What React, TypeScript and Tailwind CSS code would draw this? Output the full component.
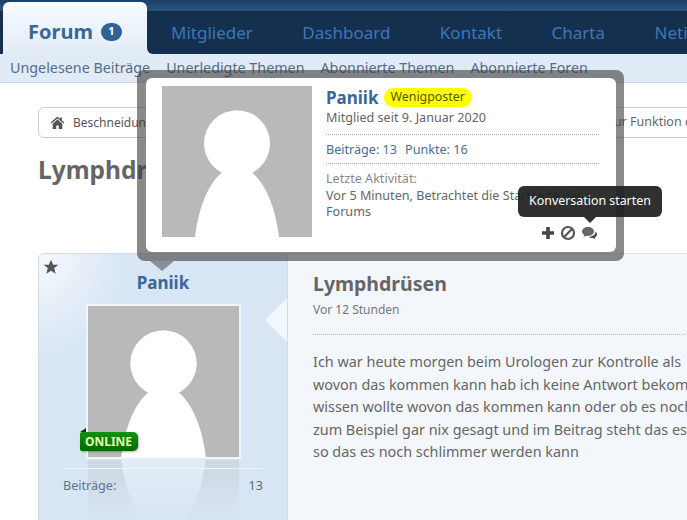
import React from "react";

const font = "font-['Noto_Sans','DejaVu_Sans',sans-serif]";

const Avatar = ({ className = "" }: { className?: string }) => (
  <svg viewBox="0 0 150 150" preserveAspectRatio="none" className={className}>
    <rect width="150" height="150" fill="#b9b9b9" />
    <circle cx="75" cy="57" r="33" fill="#fff" />
    <path d="M33 150C37 118 47 96 62 84H88C103 96 113 118 117 150Z" fill="#fff" />
  </svg>
);

const PopupIcons = () => (
  <div className="flex items-center justify-end gap-[5px] absolute right-0 top-[139px]">
    <svg viewBox="0 0 14 14" className="w-[14px] h-[14px]">
      <path d="M5.200 1h3.600v4.200H13v3.600H8.800V13H5.200V8.800H1V5.200h4.200z" fill="#444" />
    </svg>
    <svg viewBox="0 0 16 16" className="w-[16px] h-[16px]" fill="none" stroke="#555" strokeWidth="2.200">
      <circle cx="8" cy="8" r="6" />
      <path d="M3.800 12.200 12.200 3.800" />
    </svg>
    <svg viewBox="0 0 18 16" className="w-[18px] h-[16px]">
      <path d="M7 2C3.500 2 1 4 1 6.500c0 1.500.9 2.700 2.200 3.500L2.500 12l2.700-1.300c.6.1 1.200.2 1.800.2 3.500 0 6-2 6-4.400S10.500 2 7 2z" fill="#666" />
      <path d="M14.500 6.500c.3 2.800-2.800 5.300-6.500 5.300h-.5c1 .8 2.300 1.200 3.700 1.200l.8-.1 2.500 1.200-.6-1.800c1.300-.7 2.100-1.800 2.100-3 0-1.100-.6-2.100-1.500-2.800z" fill="#444" />
    </svg>
  </div>
);

const tabs = ["Mitglieder", "Dashboard", "Kontakt", "Charta", "Netiquette"];
const subs = ["Ungelesene Beiträge", "Unerledigte Themen", "Abonnierte Themen", "Abonnierte Foren"];
const lines = [
  "Ich war heute morgen beim Urologen zur Kontrolle als",
  "wovon das kommen kann hab ich keine Antwort bekom",
  "wissen wollte wovon das kommen kann oder ob es noch",
  "zum Beispiel gar nix gesagt und im Beitrag steht das es",
  "so das es noch schlimmer werden kann",
];

export default function App() {
  return (
    <div className={`${font} relative w-[687px] h-[520px] overflow-hidden bg-white text-[12px] text-[#555]`}>
      {/* header */}
      <div className="h-[54px] bg-[linear-gradient(#1c3f66_0,#2a5580_10px,#234a73_11px,#15304f_11px,#14304e_100%)] flex items-end pl-[3px] relative">
        <div className="w-[144px] h-[53px] -mb-px bg-[linear-gradient(#f7fbff,#e1ebf6)] rounded-t-[6px] flex items-center justify-center gap-[8px] pt-[6px] shrink-0">
          <span className="text-[20px] font-bold text-[#3a6795] leading-none">Forum</span>
          <span className="w-[21px] h-[18px] rounded-full bg-[#2d6396] text-white text-[11px] font-bold flex items-center justify-center">1</span>
        </div>
        <div className="flex h-[43px] items-center text-[17px] text-[#3b77ba] whitespace-nowrap pl-[24px] gap-[49.500px]">
          {tabs.map((t) => (
            <span key={t}>{t}</span>
          ))}
        </div>
        <div className="absolute left-[147px] bottom-0 w-[6px] h-[6px] bg-[#e1ebf6]">
          <div className="w-full h-full bg-[#14304e] rounded-bl-[6px]" />
        </div>
      </div>
      {/* sub nav */}
      <div className="h-[29px] pb-[1px] bg-[#e1ebf6] border-b border-[#ccd6e2] flex items-center pl-[10px] gap-[16px] text-[14.300px] text-[#566d87] whitespace-nowrap">
        {subs.map((s) => (
          <span key={s}>{s}</span>
        ))}
      </div>
      {/* page */}
      <div className="pl-[38px] pt-[24px]">
        <div className="h-[31px] w-[700px] border border-[#ccc] rounded-l-[6px] bg-white flex items-center pl-[11px] gap-[8px] whitespace-nowrap">
          <svg viewBox="0 0 16 14" className="w-[15px] h-[13px]">
            <path d="M8 0.500 0.500 7l1 1.200L8 2.600l6.500 5.600 1-1.200-2.800-2.400V1.500h-2v1.700z" fill="#555" />
            <path d="M2.800 8.400V14h3.900v-3.700h2.600V14h3.900V8.400L8 3.900z" fill="#555" />
          </svg>
          <span className="text-[12px] w-[527px] shrink-0">Beschneidung</span>
          <span className="text-[12.500px] text-[#666]">zur Funktion der</span>
        </div>
        <h1 className="mt-[17px] text-[24.500px] font-bold text-[#666] leading-[30px]">Lymphdrüsen</h1>
        <div className="mt-[68px] flex items-start">
          {/* user column */}
          <div className="relative w-[250px] h-[300px] shrink-0 border border-[#cfdbe8] rounded-tl-[6px] bg-[radial-gradient(ellipse_at_0_0,#f5f9fd_0,#d7e5f4_90px)] flex flex-col items-center">
            <svg viewBox="0 0 14 14" className="absolute left-[4px] top-[5px] w-[16px] h-[16px]">
              <path d="M7 .7 8.900 5H13.500L9.800 7.900 11.100 13 7 10.200 2.900 13 4.200 7.900.5 5H5.100z" fill="#555" />
            </svg>
            <div className="mt-[17px] text-[17px] font-bold text-[#3a6795] leading-[24px]">Paniik</div>
            <div className="relative mt-[9px] border-2 border-[#f1f5fa]">
              <Avatar className="block w-[151px] h-[151px]" />
              <div className="absolute left-[-8px] top-[126px] h-[19px] w-[58px] rounded-r-[5px] rounded-l-[2px] bg-[linear-gradient(#119211,#006a00)] text-[#e6ffb0] text-[12px] font-bold flex items-center justify-center shadow-[1px_1px_2px_rgba(0,0,0,.3)]">ONLINE</div>
              <div className="absolute left-[-8px] top-[122px] w-0 h-0 border-l-[6px] border-l-transparent border-b-[4px] border-b-[#0a3d0a]" />
            </div>
            <div className="w-[200px] border-t border-[#eef4fb] mt-[9px] pt-[8px] flex justify-between relative z-10 text-[12.600px] text-[#5f7591]">
              <span>Beiträge:</span>
              <span className="text-[#666]">13</span>
            </div>
            <div className="absolute left-[49px] top-[206px] w-[151px] h-[58px] overflow-hidden opacity-30 pointer-events-none">
              <Avatar className="block w-[151px] h-[151px] -scale-y-100" />
              <div className="absolute inset-0 bg-[linear-gradient(transparent,#d7e5f4)]" />
            </div>
            <div className="absolute right-0 top-[44px] w-0 h-0 border-y-[22px] border-y-transparent border-r-[22px] border-r-[#f3f6fb]" />
          </div>
          {/* message */}
          <div className="pl-[25px] pt-[16px] w-[500px] shrink-0 border-t border-[#dfe5ee] h-[300px] bg-[#f3f6fb]">
            <h2 className="text-[19.500px] font-bold text-[#666] leading-[28px]">Lymphdrüsen</h2>
            <div className="text-[12px] text-[#777] mt-[3px]">Vor 12 Stunden</div>
            <div className="border-t border-dotted border-[#bbb] mt-[15px] pt-[16px] text-[14.400px] leading-[22.500px] text-[#666] whitespace-nowrap">
              {lines.map((l) => (
                <div key={l}>{l}</div>
              ))}
            </div>
          </div>
        </div>
      </div>
      {/* member card overlay */}
      <div className="absolute left-[137px] top-[70px] w-[487px] h-[191px] rounded-[8px] bg-[rgba(60,60,60,.6)] pl-[9px] pt-[8px]">
        <div className="w-[470px] h-[174px] rounded-[6px] bg-white flex p-[8px] pl-[16px] gap-[14px]">
          <Avatar className="w-[150px] h-[151px] shrink-0" />
          <div className="relative flex flex-col w-[273px] text-[12.600px]">
            <div className="flex items-center gap-[5px] h-[21px] mt-[1px]">
              <span className="text-[17px] font-bold text-[#3a6795]">Paniik</span>
              <span className="h-[19px] px-[7px] rounded-full bg-[#ffff00] text-[#555500] text-[12.400px] flex items-center">Wenigposter</span>
            </div>
            <div className="text-[#666] leading-[16px] mt-[2px]">Mitglied seit 9. Januar 2020</div>
            <div className="border-t border-dotted border-[#aaa] mt-[8px] pt-[6px] h-[29px] text-[#4a6c94] flex gap-[8px]">
              <span>Beiträge: 13</span>
              <span>Punkte: 16</span>
            </div>
            <div className="border-t border-dotted border-[#aaa] pt-[7px] text-[#666] leading-[16.500px]">
              <div className="text-[#888]">Letzte Aktivität:</div>
              <div>Vor 5 Minuten, Betrachtet die Startseite des Forums</div>
            </div>
            <PopupIcons />
          </div>
        </div>
        <div className="absolute left-[13px] top-[191px] w-0 h-0 border-x-[12px] border-x-transparent border-t-[10px] border-t-[rgba(60,60,60,.5)]" />
      </div>
      {/* tooltip */}
      <div className="absolute left-[518px] top-[186px] h-[31px] w-[144px] rounded-[6px] bg-[rgba(30,30,30,.92)] text-white text-[12.400px] flex items-center justify-center whitespace-nowrap">
        Konversation starten
        <div className="absolute left-[66px] top-[31px] w-0 h-0 border-x-[6px] border-x-transparent border-t-[6px] border-t-[rgba(30,30,30,.92)]" />
      </div>
    </div>
  );
}
